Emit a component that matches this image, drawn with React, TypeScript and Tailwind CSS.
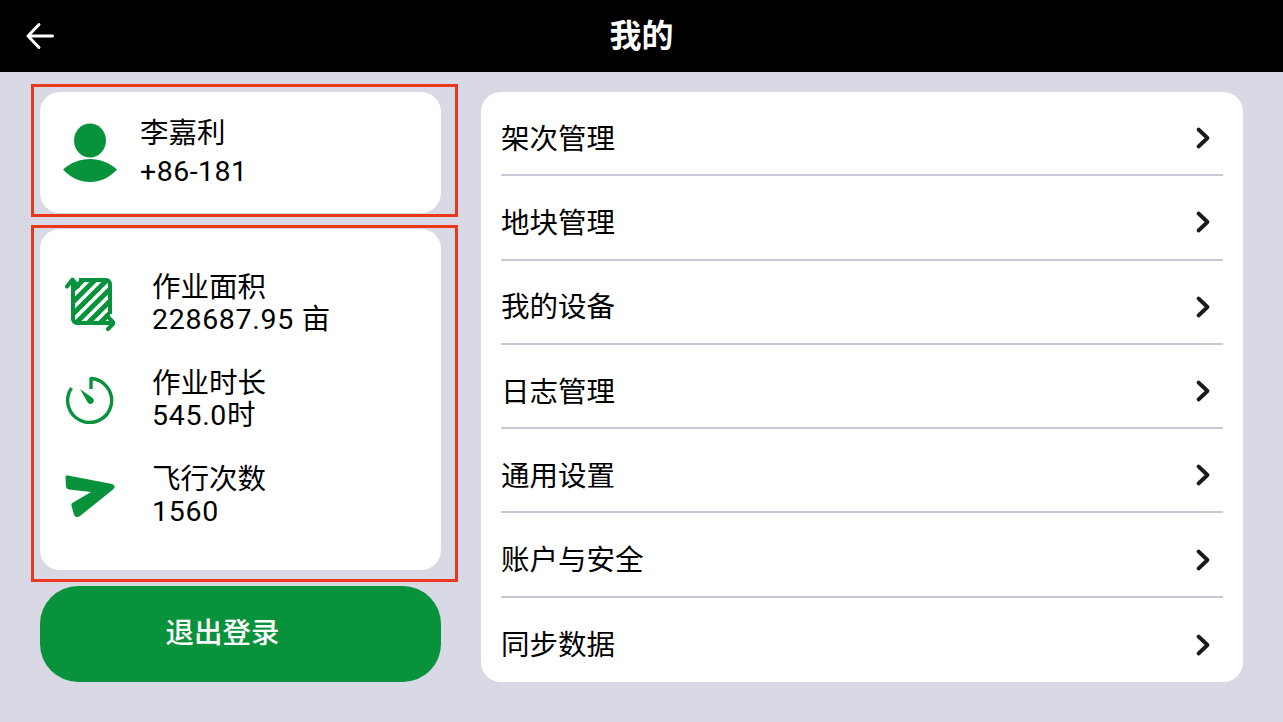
const font = { fontFamily: '"Roboto","Noto Sans CJK SC",sans-serif' };

const GREEN = "#08923c";

function Back() {
  return (
    <svg width="30" height="30" viewBox="0 0 30 30" fill="none" stroke="#fff" strokeWidth="3" strokeLinecap="round" strokeLinejoin="round">
      <path d="M3.500 15H27.500M14 3.500 3 15 14 26.500" />
    </svg>
  );
}

function Chevron() {
  return (
    <svg className="mb-[4px]" width="16" height="24" viewBox="0 0 16 24" fill="none" stroke="#1a1a1a" strokeWidth="3.800" strokeLinecap="round" strokeLinejoin="round">
      <path d="M3.500 3.500 12.500 12 3.500 20.500" />
    </svg>
  );
}

function UserIcon() {
  return (
    <svg width="54" height="60" viewBox="0 0 54 60" fill={GREEN}>
      <ellipse cx="27" cy="17.500" rx="16" ry="17" />
      <path d="M0 46.500C8 39.500 17 36 27 36S46 39.500 54 46.500C46 55 37 59 27 59S8 55 0 46.500Z" />
    </svg>
  );
}

function AreaIcon() {
  return (
    <svg width="50" height="56" viewBox="0 0 50 56" fill="none">
      <defs>
        <clipPath id="sq"><rect x="9" y="5" width="36" height="41" /></clipPath>
      </defs>
      <path d="M14 4H41a4 4 0 0 1 4 4V38M40 47H12a4 4 0 0 1-4-4V4" stroke={GREEN} strokeWidth="4" />
      <g clipPath="url(#sq)" stroke={GREEN} strokeWidth="5">
        <path d="M0 22 22 0M0 34 34 0M0 46 46 0M0 58 58 0M0 70 70 0M0 82 82 0" />
      </g>
      <path d="M2 10.500 7.500 3.500 13 10.500" stroke={GREEN} strokeWidth="4" strokeLinejoin="round" strokeLinecap="round" />
      <path d="M38 47H48M43 41l6 6-6 6" stroke={GREEN} strokeWidth="4" strokeLinejoin="round" strokeLinecap="round" />
    </svg>
  );
}

function TimerIcon() {
  return (
    <svg width="48" height="48" viewBox="0 0 48 48" fill="none">
      <path d="M5.500 12A22 22 0 1 0 25 2.500V13" stroke={GREEN} strokeWidth="3.400" strokeLinejoin="round" />
      <path d="M14 13 26 21.500a3.400 3.400 0 1 1-4.600 4.500Z" fill={GREEN} />
    </svg>
  );
}

function PlaneIcon() {
  return (
    <svg width="50" height="42" viewBox="0 0 50 42" fill={GREEN}>
      <path d="M3 0.500 47 9C50 10 50.500 12.500 48 14.500L15 41C12 43 10 42 9 39.500L6.500 31C6 29 7 28 9 27L26 17 4 14.500C2 14.200 1 13 1 11L0.500 3C0.500 1 1 0 3 0.500Z" />
    </svg>
  );
}

const stats = [
  { icon: <AreaIcon />, title: "作业面积", value: "228687.95 亩" },
  { icon: <TimerIcon />, title: "作业时长", value: "545.0时" },
  { icon: <PlaneIcon />, title: "飞行次数", value: "1560" },
];

const menu = ["架次管理", "地块管理", "我的设备", "日志管理", "通用设置", "账户与安全", "同步数据"];

export default function App() {
  return (
    <div className="relative flex h-[722px] w-[1283px] flex-col overflow-hidden bg-[#d9d9e5] text-black" style={font}>
      <header className="relative flex h-[72px] shrink-0 items-center justify-center bg-black">
        <div className="absolute left-[25px] top-[21px] flex"><Back /></div>
        <h1 className="text-[32px] font-bold leading-none text-white">我的</h1>
      </header>

      <main className="flex gap-10 pl-10 pt-5">
        <div className="flex w-[401px] flex-col">
          <section className="flex h-[121px] items-center rounded-[20px] bg-white pl-[23px]">
            <UserIcon />
            <div className="ml-[23px] flex flex-col text-[28.500px] leading-[38px]">
              <span>李嘉利</span>
              <span className="tracking-[0.5px]">+86-181</span>
            </div>
          </section>

          <section className="mt-4 flex h-[341px] flex-col justify-center gap-[20px] rounded-[20px] bg-white">
            {stats.map((s) => (
              <div key={s.title} className="flex h-[76px] items-center">
                <div className="flex w-[112px] justify-center pr-[12px]">{s.icon}</div>
                <div className="flex flex-col text-[28.500px] leading-[32px]">
                  <span>{s.title}</span>
                  <span className="tracking-[0.7px]">{s.value}</span>
                </div>
              </div>
            ))}
          </section>

          <button className="mt-4 flex h-[96px] items-center justify-center rounded-[38px] pr-[36px] text-[28.500px] font-medium text-white" style={{ backgroundColor: GREEN }}>
            退出登录
          </button>
        </div>

        <section className="flex h-[590px] w-[762px] flex-col rounded-[20px] bg-white px-5">
          {menu.map((m, i) => (
            <div key={m} className={`flex h-[84.300px] items-center justify-between pr-[12px] pt-[14px] text-[28.500px] ${i < menu.length - 1 ? "border-b-2 border-[#c8c8d6]" : ""}`}>
              <span>{m}</span>
              <Chevron />
            </div>
          ))}
        </section>
      </main>

      <div className="pointer-events-none absolute left-[31px] top-[84px] h-[133px] w-[427px] border-[3px] border-[#e8391c]" />
      <div className="pointer-events-none absolute left-[31px] top-[225px] h-[357px] w-[427px] border-[3px] border-[#e8391c]" />
    </div>
  );
}
